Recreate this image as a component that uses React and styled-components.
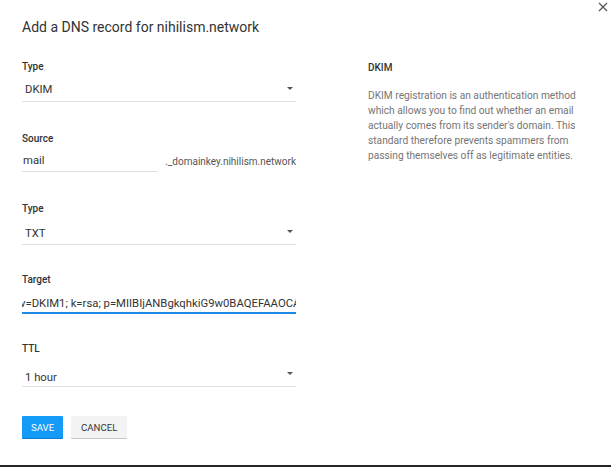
import React from "react";
import styled, { createGlobalStyle } from "styled-components";

const Global = createGlobalStyle`
  html, body { margin: 0; padding: 0; background: #fff; }
  body { font-family: Roboto, "Noto Sans", sans-serif; color: #333; }
  * { box-sizing: border-box; }
`;

const Dialog = styled.div`
  position: relative;
  width: 611px;
  height: 467px;
  background: #fff;
  border-bottom: 2px solid #262626;
  padding: 18px 22px 0 22px;
`;

const Close = styled.button`
  position: absolute;
  top: 1px;
  right: 2px;
  width: 12px;
  height: 12px;
  padding: 0;
  border: 0;
  background: none;
  display: flex;
`;

const Title = styled.h1`
  margin: 0;
  font-size: 14px;
  font-weight: 400;
  color: #333;
  line-height: 18px;
`;

const Columns = styled.div`
  display: grid;
  grid-template-columns: 274px 1fr;
  column-gap: 72px;
  margin-top: 25px;
`;

const Form = styled.div`
  display: flex;
  flex-direction: column;
`;

const Field = styled.div`
  display: flex;
  flex-direction: column;
  margin-bottom: ${(p) => p.$gap}px;
`;

const Label = styled.div`
  font-size: 10px;
  font-weight: 500;
  color: #333;
  line-height: 12px;
`;

const Control = styled.div`
  display: flex;
  align-items: flex-end;
  justify-content: space-between;
  height: ${(p) => p.$h}px;
  padding-bottom: ${(p) => p.$pb}px;
  padding-left: ${(p) => (p.$select ? 3 : 1)}px;
  border-bottom: ${(p) => (p.$focus ? "2px solid #1e88e5" : "1px solid #e0e0e0")};
  font-size: 11.3px;
  line-height: 16px;
  color: #333;
  overflow: hidden;
  white-space: nowrap;
  width: ${(p) => p.$w || "100%"};
`;

const Caret = styled.span`
  flex: none;
  width: 0;
  height: 0;
  border-left: 3px solid transparent;
  border-right: 3px solid transparent;
  border-top: 3px solid #555;
  margin-right: 3px;
  margin-bottom: ${(p) => 11 - p.$pb}px;
`;

const Row = styled.div`
  display: flex;
  align-items: flex-end;
  gap: 7px;
`;

const Suffix = styled.span`
  font-size: 10px;
  color: #555;
  line-height: 16px;
  padding-bottom: 2px;
`;

const Scrolled = styled.span`
  margin-left: -3px;
`;

const Buttons = styled.div`
  display: flex;
  gap: 8px;
`;

const Button = styled.button`
  height: 22px;
  padding: 0 ${(p) => (p.$primary ? 9 : 10)}px;
  border: 0;
  border-radius: 1px;
  font-family: Roboto, sans-serif;
  font-size: 9.6px;
  font-weight: 400;
  text-transform: uppercase;
  background: ${(p) => (p.$primary ? "#139bf7" : "#f3f3f3")};
  color: ${(p) => (p.$primary ? "#fff" : "#333")};
  box-shadow: 0 1px 0 ${(p) => (p.$primary ? "#0c7fcc" : "#c8c8c8")};
`;

const Help = styled.div`
  padding-top: 1px;
`;

const HelpTitle = styled.div`
  font-size: 10px;
  font-weight: 500;
  color: #333;
  line-height: 12px;
  margin-bottom: 14px;
`;

const HelpText = styled.p`
  margin: 0;
  font-size: 10.2px;
  line-height: 15px;
  color: #757575;
  width: 210px;
`;

export default function App() {
  return (
    <>
      <Global />
      <Dialog>
        <Close aria-label="close">
          <svg width="12" height="12" viewBox="0 0 12 12">
            <path d="M2 2L10 10M10 2L2 10" stroke="#555" strokeWidth="1.3" />
          </svg>
        </Close>
        <Title>Add a DNS record for nihilism.network</Title>
        <Columns>
          <Form>
            <Field $gap={31}>
              <Label>Type</Label>
              <Control $select $h={29} $pb={3}>
                <span>DKIM</span>
                <Caret $pb={3} />
              </Control>
            </Field>
            <Field $gap={31}>
              <Label>Source</Label>
              <Row>
                <Control $h={27} $pb={2} $w="138px">
                  <span>mail</span>
                </Control>
                <Suffix>._domainkey.nihilism.network</Suffix>
              </Row>
            </Field>
            <Field $gap={29}>
              <Label>Type</Label>
              <Control $select $h={30} $pb={2}>
                <span>TXT</span>
                <Caret $pb={2} />
              </Control>
            </Field>
            <Field $gap={29}>
              <Label>Target</Label>
              <Control $focus $h={28} $pb={0}>
                <Scrolled>v=DKIM1; k=rsa; p=MIIBIjANBgkqhkiG9w0BAQEFAAOCAQ8AMIIBCgKCAQEA</Scrolled>
              </Control>
            </Field>
            <Field $gap={29}>
              <Label>TTL</Label>
              <Control $select $h={32} $pb={0}>
                <span>1 hour</span>
                <Caret $pb={0} />
              </Control>
            </Field>
            <Buttons>
              <Button $primary>Save</Button>
              <Button>Cancel</Button>
            </Buttons>
          </Form>
          <Help>
            <HelpTitle>DKIM</HelpTitle>
            <HelpText>
              DKIM registration is an authentication method which allows you to find out whether an email
              actually comes from its sender's domain. This standard therefore prevents spammers from
              passing themselves off as legitimate entities.
            </HelpText>
          </Help>
        </Columns>
      </Dialog>
    </>
  );
}
